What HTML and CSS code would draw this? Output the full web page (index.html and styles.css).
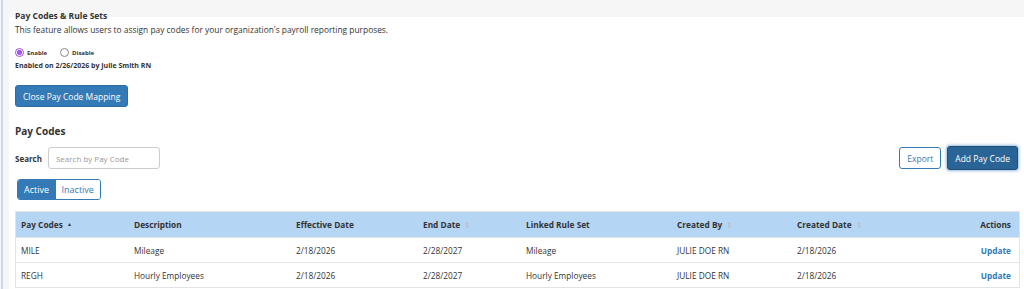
FILE: index.html
```html
<!DOCTYPE html>
<html lang="en">
<head>
    <meta charset="UTF-8">
    <title>Pay Codes &amp; Rule Sets</title>
    <link rel="stylesheet" href="styles.css">
</head>
<body>
    <div class="page">
        <h2 class="title">Pay Codes &amp; Rule Sets</h2>
        <p class="intro">This feature allows users to assign pay codes for your organization's payroll reporting purposes.</p>

        <div class="radios">
            <label class="radio"><span class="dot checked"></span>Enable</label>
            <label class="radio"><span class="dot"></span>Disable</label>
        </div>
        <div class="enabled-note">Enabled on 2/26/2026 by Julie Smith RN</div>

        <button class="btn btn-primary close-btn">Close Pay Code Mapping</button>

        <h3 class="section">Pay Codes</h3>

        <div class="toolbar">
            <div class="search">
                <label>Search</label>
                <input type="text" placeholder="Search by Pay Code">
            </div>
            <div class="actions">
                <button class="btn btn-outline">Export</button>
                <button class="btn btn-dark">Add Pay Code</button>
            </div>
        </div>

        <div class="toggle">
            <button class="on">Active</button>
            <button>Inactive</button>
        </div>

        <table class="grid">
            <thead>
                <tr>
                    <th class="c1">Pay Codes <span class="up">&#9650;</span></th>
                    <th class="c2">Description</th>
                    <th class="c3">Effective Date</th>
                    <th class="c4">End Date <span class="sort">&#8661;</span></th>
                    <th class="c5">Linked Rule Set</th>
                    <th class="c6">Created By <span class="sort">&#8661;</span></th>
                    <th class="c7">Created Date <span class="sort">&#8661;</span></th>
                    <th class="c8">Actions</th>
                </tr>
            </thead>
            <tbody>
                <tr>
                    <td>MILE</td>
                    <td>Mileage</td>
                    <td>2/18/2026</td>
                    <td>2/28/2027</td>
                    <td>Mileage</td>
                    <td>JULIE DOE RN</td>
                    <td>2/18/2026</td>
                    <td class="c8"><a href="#">Update</a></td>
                </tr>
                <tr>
                    <td>REGH</td>
                    <td>Hourly Employees</td>
                    <td>2/18/2026</td>
                    <td>2/28/2027</td>
                    <td>Hourly Employees</td>
                    <td>JULIE DOE RN</td>
                    <td>2/18/2026</td>
                    <td class="c8"><a href="#">Update</a></td>
                </tr>
            </tbody>
        </table>
    </div>
</body>
</html>
```

FILE: styles.css
```css
html, body {
    margin: 0;
    height: 100%;
}
body {
    font-family: 'Open Sans', sans-serif;
    color: #333;
    background: #f6f6f6;
    border-left: 2px solid #c9d8f0;
    padding-left: 6px;
    margin-left: 1px;
    overflow: hidden;
}
.page {
    background: linear-gradient(#f6f6f6 0, #f6f6f6 17px, #fff 17px);
    padding: 10px 6px 0 6px;
    min-height: 100%;
}
.title {
    margin: 0;
    font-size: 8.5px;
    line-height: 11px;
    font-weight: 700;
    color: #333;
}
.intro {
    margin: 3px 0 0;
    font-size: 8.4px;
    line-height: 12px;
    color: #333;
}
.radios {
    display: flex;
    gap: 13px;
    margin-top: 12px;
}
.radio {
    display: flex;
    align-items: center;
    gap: 3px;
    font-size: 6px;
    font-weight: 700;
    color: #333;
}
.dot {
    width: 7px;
    height: 7px;
    border: 1px solid #888;
    border-radius: 50%;
    background: #fff;
}
.dot.checked {
    border-color: #9b4fd6;
    background: radial-gradient(circle, #a855f7 0, #a855f7 2.3px, #fff 2.8px);
}
.enabled-note {
    margin-top: 4px;
    font-size: 7px;
    font-weight: 700;
    color: #333;
}
.btn {
    font-family: 'Open Sans', sans-serif;
    font-size: 8.5px;
    border-radius: 3px;
    cursor: pointer;
}
.btn-primary {
    background: #337ab7;
    color: #fff;
    border: 1px solid #2e6da4;
}
.close-btn {
    display: block;
    margin-top: 15px;
    height: 22px;
    padding: 0 7px;
}
.section {
    margin: 17px 0 0;
    font-size: 10px;
    font-weight: 700;
    color: #333;
}
.toolbar {
    display: flex;
    justify-content: space-between;
    align-items: center;
    margin-top: 8px;
}
.search {
    display: flex;
    align-items: center;
    gap: 6px;
}
.search label {
    font-size: 8px;
    font-weight: 700;
}
.search input {
    width: 96px;
    height: 20px;
    padding: 0 7px;
    border: 1px solid #ccc;
    border-radius: 3px;
    font-family: 'Open Sans', sans-serif;
    font-size: 8px;
}
.search input::placeholder {
    color: #999;
}
.actions {
    display: flex;
    gap: 6px;
    align-items: center;
}
.btn-outline {
    background: #fff;
    color: #337ab7;
    border: 1px solid #337ab7;
    height: 22px;
    padding: 0 7px;
}
.btn-dark {
    background: #2a6496;
    color: #fff;
    border: 1px solid #1f4f78;
    height: 24px;
    padding: 0 7px;
    box-shadow: 0 0 3px 1px rgba(80, 140, 200, 0.6);
}
.toggle {
    display: inline-flex;
    margin: 9px 0 0 2px;
    border: 1px solid #337ab7;
    border-radius: 3px;
    overflow: hidden;
}
.toggle button {
    font-family: 'Open Sans', sans-serif;
    font-size: 9px;
    height: 19px;
    padding: 0 6.5px 0 6px;
    border: 0;
    background: #fff;
    color: #337ab7;
}
.toggle button.on {
    background: #337ab7;
    color: #fff;
}
.grid {
    width: 1005px;
    margin-top: 11px;
    border-collapse: collapse;
    border: 1px solid #e3e3e3;
    font-size: 8.3px;
}
.grid th {
    background: #b5d5f5;
    font-weight: 700;
    text-align: left;
    height: 25px;
    padding: 0 5px;
    color: #333;
}
.grid td {
    height: 24px;
    padding: 0 5px;
    border-top: 1px solid #e3e3e3;
}
.grid .c1 { width: 103px; }
.grid .c2 { width: 152px; }
.grid .c3 { width: 117px; }
.grid .c4 { width: 93px; }
.grid .c5 { width: 141px; }
.grid .c6 { width: 110px; }
.grid .c7 { width: 150px; }
.grid .c8 { text-align: right; padding-right: 8px; }
.up {
    font-size: 5px;
    vertical-align: 2px;
    margin-left: 2px;
}
.sort {
    color: #bbb;
    font-weight: 400;
    margin-left: 2px;
}
.grid a {
    color: #337ab7;
    font-weight: 700;
    text-decoration: none;
}
```
